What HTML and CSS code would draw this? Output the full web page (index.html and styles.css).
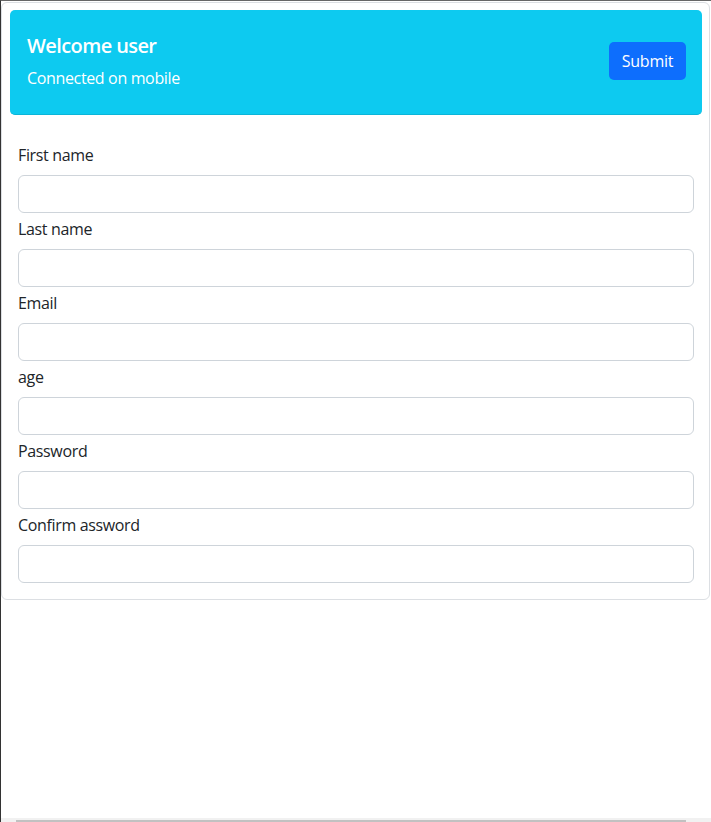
FILE: index.html
```html
<!DOCTYPE html>
<html>
<head>
<meta charset="utf-8">
<link rel="stylesheet" href="styles.css">
</head>
<body>
<div class="frame">
  <div class="card">
    <div class="banner">
      <div class="banner-text">
        <h4 class="title">Welcome user</h4>
        <p class="subtitle">Connected on mobile</p>
      </div>
      <button class="btn">Submit</button>
    </div>
    <form class="form">
      <label class="label">First name</label>
      <input class="input" type="text">
      <label class="label">Last name</label>
      <input class="input" type="text">
      <label class="label">Email</label>
      <input class="input" type="text">
      <label class="label">age</label>
      <input class="input" type="text">
      <label class="label">Password</label>
      <input class="input" type="text">
      <label class="label">Confirm assword</label>
      <input class="input" type="text">
    </form>
  </div>
</div>
<div class="hscroll"><div class="hscroll-thumb"></div></div>
</body>
</html>
```

FILE: styles.css
```css
* { box-sizing: border-box; }
html, body { margin: 0; padding: 0; height: 100%; background: #fff; }
body {
  font-family: "Open Sans", "DejaVu Sans", sans-serif;
  color: #212529;
  font-size: 16px;
  line-height: 24px;
  letter-spacing: -0.35px;
}
.frame {
  min-height: 100%;
  border-left: 1px solid #333;
  border-top: 1px solid #666;
  padding: 1px 1px 0 0;
}
.card {
  border: 1px solid #dcdfe3;
  border-radius: 6px;
  padding: 7px 7px 0 8px;
}
.banner {
  background: #0dcaf0;
  border-radius: 5px;
  border-bottom: 1px solid #0bb5d8;
  display: flex;
  align-items: center;
  justify-content: space-between;
  padding: 22px 16px 22px 17px;
  height: 105px;
}
.title {
  margin: 0 0 8px 0;
  color: #fff;
  font-size: 20px;
  line-height: 24px;
  font-weight: 600;
  letter-spacing: -0.6px;
}
.subtitle {
  margin: 0;
  color: #fff;
  font-size: 16px;
  line-height: 24px;
}
.btn {
  font-family: inherit;
  font-size: 16px;
  line-height: 24px;
  letter-spacing: -0.2px;
  color: #fff;
  background: #0d6efd;
  border: none;
  border-radius: 5px;
  height: 38px;
  width: 77px;
  padding: 0;
  margin-bottom: 2px;
}
.form {
  display: flex;
  flex-direction: column;
  padding: 28px 8px 16px 8px;
}
.label {
  display: block;
  margin-bottom: 8px;
}
.input {
  display: block;
  width: 100%;
  height: 38px;
  border: 1px solid #ced4da;
  border-radius: 6px;
  margin-bottom: 4px;
  font: inherit;
}
.input:last-child { margin-bottom: 0; }
.hscroll {
  position: fixed;
  left: 1px;
  right: 0;
  bottom: 0;
  height: 4px;
  background: #f1f1f1;
}
.hscroll-thumb {
  margin: 2px 0 0 15px;
  width: 670px;
  height: 2px;
  background: #c1c1c1;
}
```
